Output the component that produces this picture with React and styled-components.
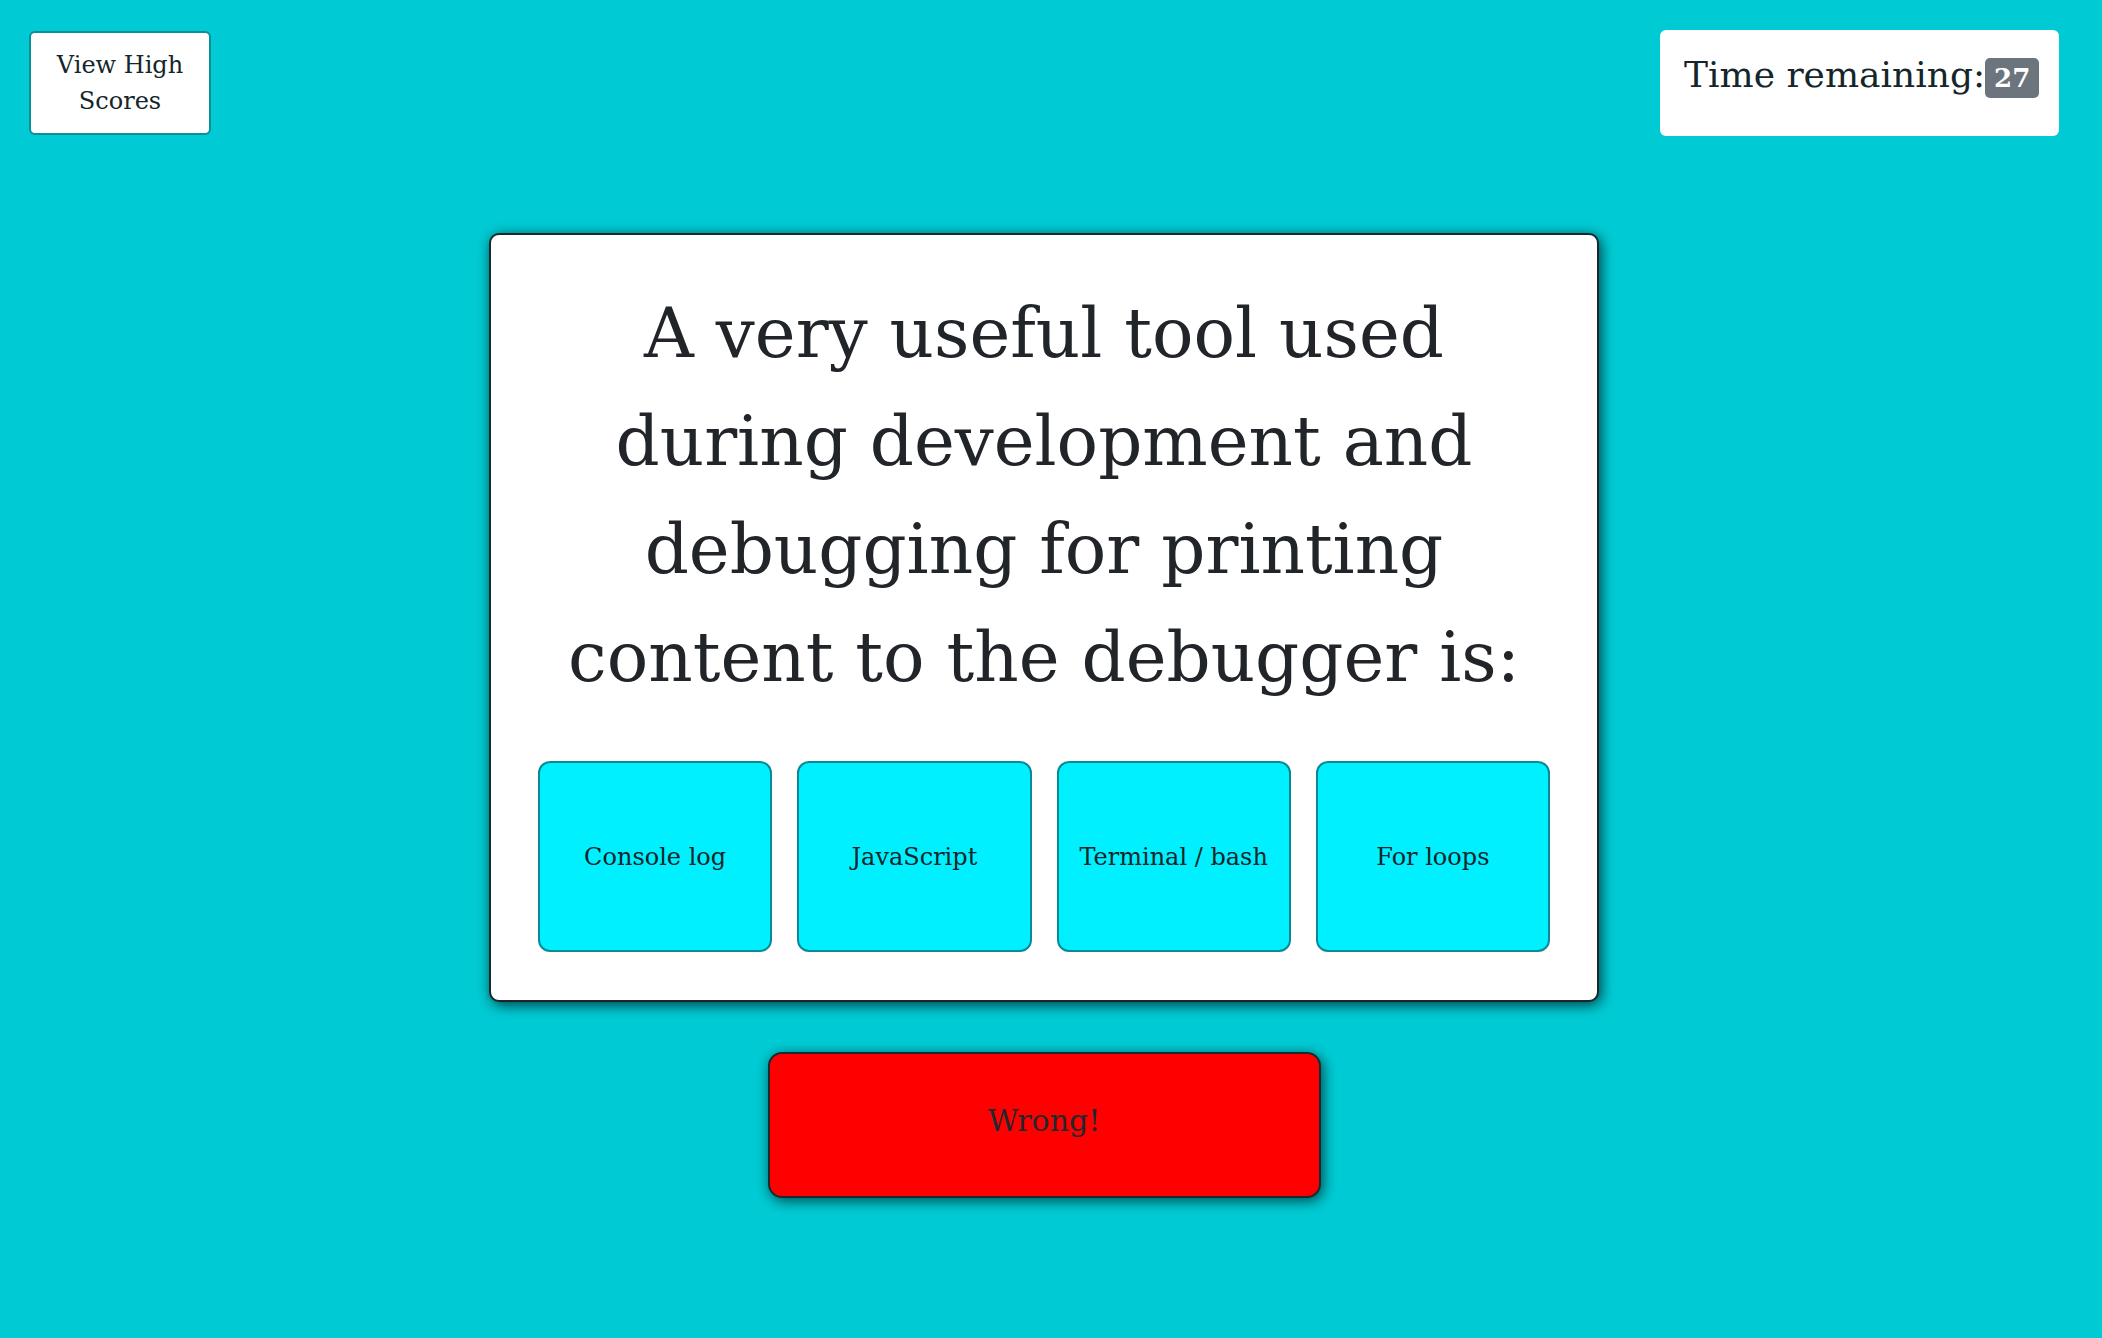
import React from "react";
import styled, { createGlobalStyle } from "styled-components";

const GlobalStyle = createGlobalStyle`
  html, body {
    margin: 0;
    padding: 0;
    background: #00cbd4;
  }
  body {
    font-family: "DejaVu Serif", "Liberation Serif", serif;
    color: #212529;
    min-height: 1338px;
  }
  * { box-sizing: border-box; }
`;

const Page = styled.div`
  display: flex;
  flex-direction: column;
  min-height: 1338px;
  background: #00cbd4;
`;

const Header = styled.header`
  display: flex;
  justify-content: space-between;
  align-items: flex-start;
  padding: 30px 43px 0 29px;
`;

const ScoresButton = styled.button`
  width: 182px;
  height: 104px;
  background: #ffffff;
  border: 2px solid #0d8f9a;
  border-radius: 6px;
  font-family: inherit;
  font-size: 24px;
  line-height: 36px;
  color: #14262a;
  padding: 0 20px;
  text-align: center;
  cursor: pointer;
  margin-top: 1px;
`;

const TimerBox = styled.div`
  width: 399px;
  height: 106px;
  background: #ffffff;
  border-radius: 6px;
  padding: 23px 24px 0 24px;
`;

const TimerText = styled.h2`
  margin: 0;
  font-size: 36px;
  font-weight: 400;
  line-height: 43px;
  color: #14262a;
  white-space: nowrap;
`;

const Badge = styled.span`
  display: inline-block;
  background: #6c757d;
  color: #ffffff;
  font-size: 26px;
  font-weight: 700;
  line-height: 1;
  padding: 7px 9px;
  border-radius: 5px;
  vertical-align: baseline;
`;

const Main = styled.main`
  display: flex;
  flex-direction: column;
  align-items: center;
  padding-right: 14px;
  margin-top: 97px;
  gap: 50px;
`;

const Card = styled.section`
  width: 1110px;
  background: #ffffff;
  border: 2px solid #18272b;
  border-radius: 10px;
  box-shadow: 2px 3px 14px rgba(0, 0, 0, 0.7);
  padding: 44px 47px 48px 47px;
  display: flex;
  flex-direction: column;
  align-items: center;
`;

const Question = styled.h1`
  margin: 0 0 50px 0;
  font-size: 69px;
  font-weight: 400;
  line-height: 108px;
  text-align: center;
  color: #212529;
`;

const Answers = styled.div`
  display: grid;
  grid-template-columns: repeat(4, 1fr);
  gap: 25px;
  width: 100%;
`;

const AnswerButton = styled.button`
  height: 191px;
  background: #00f0ff;
  border: 2px solid #0a8a97;
  border-radius: 12px;
  font-family: inherit;
  font-size: 24px;
  color: #14262a;
  cursor: pointer;
  padding: 0;
`;

const Feedback = styled.div`
  width: 553px;
  height: 146px;
  display: flex;
  align-items: center;
  justify-content: center;
  padding-bottom: 10px;
  background: #ff0000;
  border: 2px solid #1b2a2e;
  border-radius: 14px;
  box-shadow: 2px 3px 14px rgba(0, 0, 0, 0.65);
  font-size: 30px;
  color: #24282c;
`;

const answers = ["Console log", "JavaScript", "Terminal / bash", "For loops"];

export default function App() {
  return (
    <>
      <GlobalStyle />
      <Page>
        <Header>
          <ScoresButton>View High Scores</ScoresButton>
          <TimerBox>
            <TimerText>
              Time remaining:<Badge>27</Badge>
            </TimerText>
          </TimerBox>
        </Header>
        <Main>
          <Card>
            <Question>
              A very useful tool used
              <br />
              during development and
              <br />
              debugging for printing
              <br />
              content to the debugger is:
            </Question>
            <Answers>
              {answers.map((a) => (
                <AnswerButton key={a}>{a}</AnswerButton>
              ))}
            </Answers>
          </Card>
          <Feedback>Wrong!</Feedback>
        </Main>
      </Page>
    </>
  );
}
